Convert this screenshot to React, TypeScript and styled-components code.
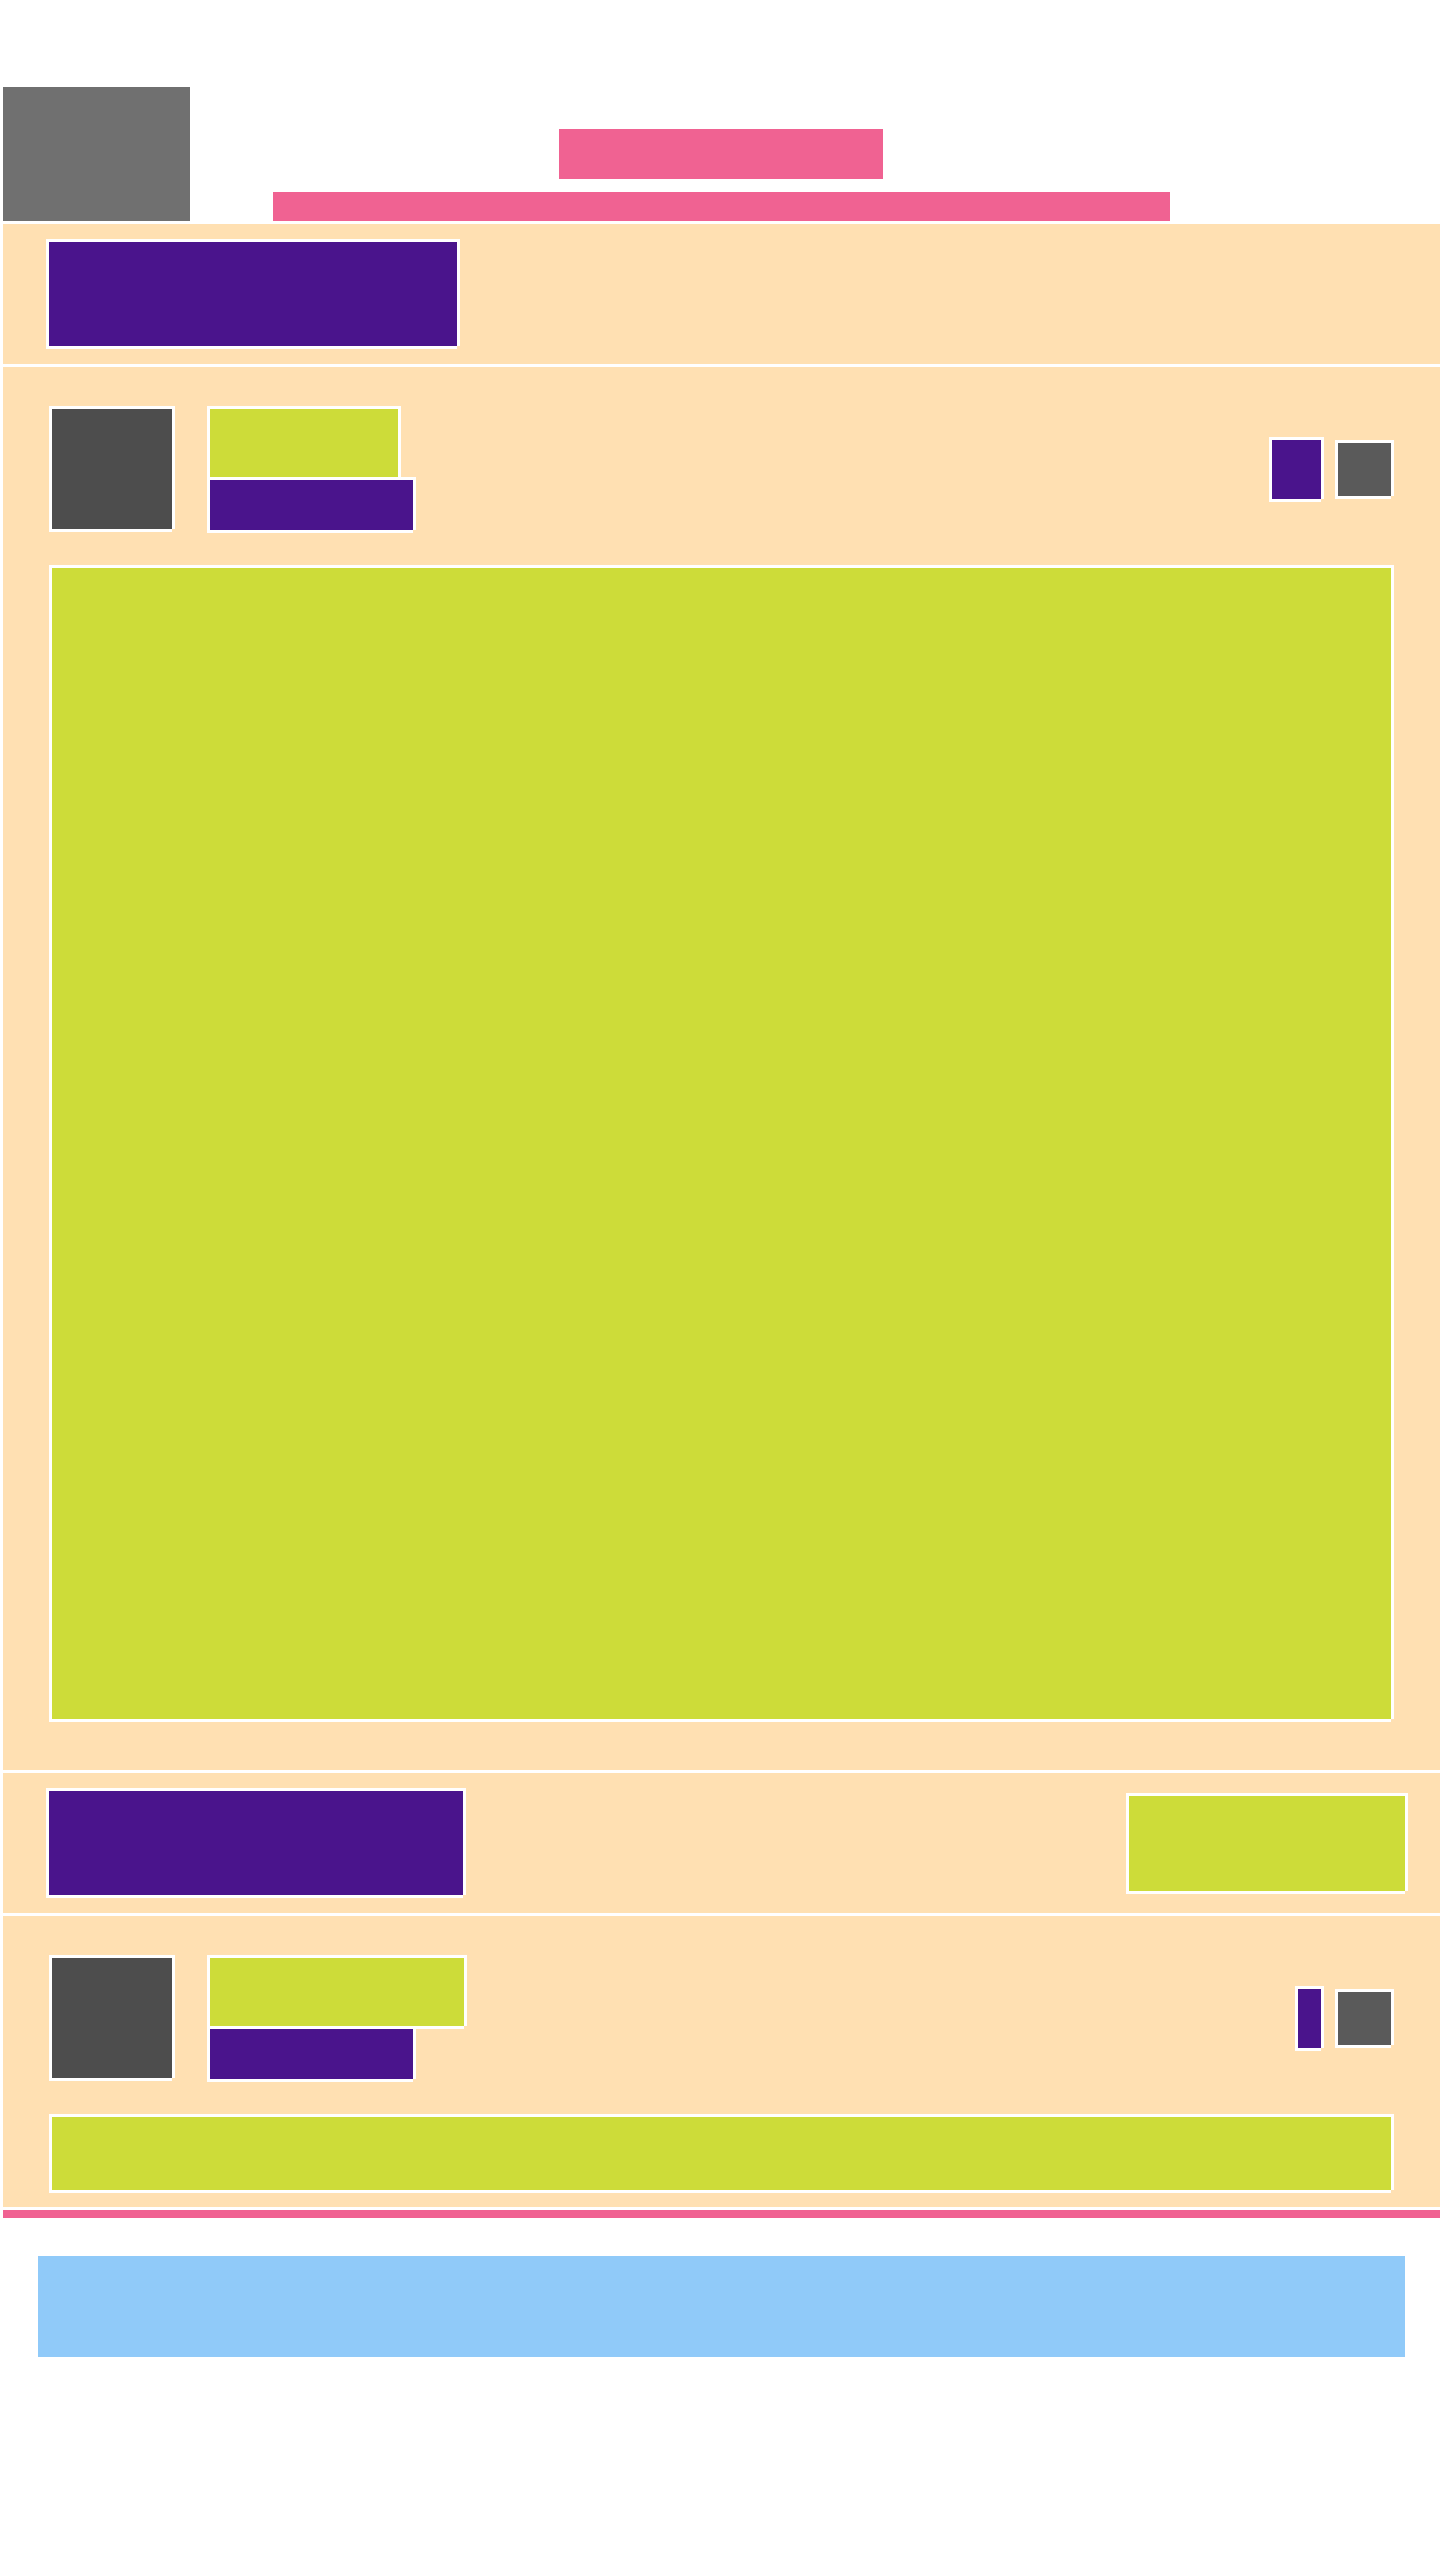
import React from "react";
import styled, { createGlobalStyle, css } from "styled-components";

const C = {
  beige: "#FFE0B2",
  purple: "#4A148C",
  lime: "#CDDC39",
  pink: "#F06292",
  blue: "#90CAF9",
  logo: "#707070",
  avatar: "#4D4D4D",
  icon: "#5A5A5A",
};

const GlobalStyle = createGlobalStyle`
  html, body {
    margin: 0;
    padding: 0;
    background: #ffffff;
    font-family: "Liberation Sans", Arial, sans-serif;
  }
  * { box-sizing: border-box; }
`;

const framed = css`
  box-shadow:
    -3px -3px 0 0 #fff,
    3px -3px 0 0 #fff,
    -3px 3px 0 0 #fff,
    3px 0 0 0 #fff,
    0 3px 0 0 #fff;
`;

const Page = styled.div`
  width: 1440px;
  padding-left: 3px;
  padding-bottom: 200px;
`;

const Header = styled.header`
  display: flex;
  align-items: flex-end;
  height: 221px;
`;

const Logo = styled.div`
  width: 187px;
  height: 134px;
  background: ${C.logo};
  flex: none;
`;

const HeaderMain = styled.div`
  display: flex;
  flex-direction: column;
  gap: 13px;
  width: 897px;
  margin-left: 83px;
  flex: none;
`;

const SiteTitle = styled.div`
  width: 324px;
  height: 50px;
  margin-left: 286px;
  background: ${C.pink};
`;

const NavBar = styled.nav`
  width: 897px;
  height: 29px;
  background: ${C.pink};
`;

const Main = styled.main`
  display: flex;
  flex-direction: column;
  gap: 3px;
  margin-top: 3px;
  width: 1437px;
`;

const BarSection = styled.section<{ $padRight?: number }>`
  display: flex;
  align-items: center;
  justify-content: space-between;
  height: 140px;
  padding: 0 ${(p) => p.$padRight ?? 0}px 0 46px;
  background: ${C.beige};
`;

const Heading = styled.div<{ $w: number }>`
  ${framed};
  width: ${(p) => p.$w}px;
  height: 104px;
  background: ${C.purple};
`;

const ActionButton = styled.div`
  ${framed};
  width: 276px;
  height: 95px;
  background: ${C.lime};
`;

const PostSection = styled.article<{ $padBottom: number }>`
  display: flex;
  flex-direction: column;
  gap: 38px;
  padding: 42px 49px ${(p) => p.$padBottom}px 49px;
  background: ${C.beige};
`;

const PostHeader = styled.div`
  display: flex;
  align-items: flex-start;
  height: 121px;
`;

const Avatar = styled.div`
  ${framed};
  width: 120px;
  height: 120px;
  flex: none;
  background: ${C.avatar};
`;

const Meta = styled.div`
  display: flex;
  flex-direction: column;
  align-items: flex-start;
  gap: 3px;
  margin-left: 38px;
`;

const Name = styled.div<{ $w: number }>`
  ${framed};
  width: ${(p) => p.$w}px;
  height: 68px;
  background: ${C.lime};
`;

const Subline = styled.div`
  ${framed};
  width: 203px;
  height: 50px;
  background: ${C.purple};
`;

const Actions = styled.div`
  display: flex;
  align-items: center;
  gap: 17px;
  margin-left: auto;
  align-self: center;
`;

const LikeButton = styled.div<{ $w: number }>`
  ${framed};
  width: ${(p) => p.$w}px;
  height: 59px;
  background: ${C.purple};
`;

const MenuButton = styled.div`
  ${framed};
  width: 53px;
  height: 53px;
  background: ${C.icon};
`;

const PostBody = styled.div<{ $h: number }>`
  ${framed};
  width: 1339px;
  height: ${(p) => p.$h}px;
  background: ${C.lime};
`;

const FooterRule = styled.div`
  width: 1437px;
  height: 8px;
  margin-top: 3px;
  background: ${C.pink};
`;

const Footer = styled.footer`
  width: 1367px;
  height: 101px;
  margin: 38px 0 0 35px;
  background: ${C.blue};
`;

type PostProps = {
  nameWidth: number;
  likeWidth: number;
  bodyHeight: number;
  padBottom: number;
};

const Post = ({ nameWidth, likeWidth, bodyHeight, padBottom }: PostProps) => (
  <PostSection $padBottom={padBottom}>
    <PostHeader>
      <Avatar />
      <Meta>
        <Name $w={nameWidth} />
        <Subline />
      </Meta>
      <Actions>
        <LikeButton $w={likeWidth} />
        <MenuButton />
      </Actions>
    </PostHeader>
    <PostBody $h={bodyHeight} />
  </PostSection>
);

export default function App() {
  return (
    <>
      <GlobalStyle />
      <Page>
        <Header>
          <Logo />
          <HeaderMain>
            <SiteTitle />
            <NavBar />
          </HeaderMain>
        </Header>
        <Main>
          <BarSection>
            <Heading $w={408} />
          </BarSection>
          <Post nameWidth={188} likeWidth={49} bodyHeight={1151} padBottom={51} />
          <BarSection $padRight={35}>
            <Heading $w={414} />
            <ActionButton />
          </BarSection>
          <Post nameWidth={254} likeWidth={23} bodyHeight={73} padBottom={17} />
        </Main>
        <FooterRule />
        <Footer />
      </Page>
    </>
  );
}
